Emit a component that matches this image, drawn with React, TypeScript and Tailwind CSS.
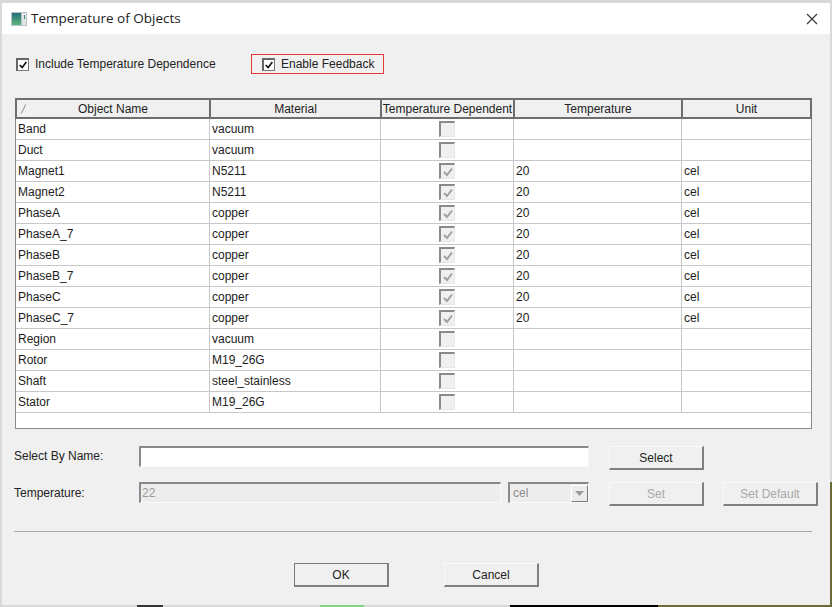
import React from 'react';

interface RowData {
    name: string;
    material: string;
    checked: boolean;
}

const rows: RowData[] = [
    { name: 'Band', material: 'vacuum', checked: false },
    { name: 'Duct', material: 'vacuum', checked: false },
    { name: 'Magnet1', material: 'N5211', checked: true },
    { name: 'Magnet2', material: 'N5211', checked: true },
    { name: 'PhaseA', material: 'copper', checked: true },
    { name: 'PhaseA_7', material: 'copper', checked: true },
    { name: 'PhaseB', material: 'copper', checked: true },
    { name: 'PhaseB_7', material: 'copper', checked: true },
    { name: 'PhaseC', material: 'copper', checked: true },
    { name: 'PhaseC_7', material: 'copper', checked: true },
    { name: 'Region', material: 'vacuum', checked: false },
    { name: 'Rotor', material: 'M19_26G', checked: false },
    { name: 'Shaft', material: 'steel_stainless', checked: false },
    { name: 'Stator', material: 'M19_26G', checked: false },
];

const COLS = 'grid grid-cols-[194px_171px_133px_168px_1fr]';

const CheckMark: React.FC<{ color: string }> = ({ color }) => (
    <svg width="12" height="12" viewBox="0 0 12 12" fill="none">
        <path d="M2 6l3 3 5-6.5" stroke={color} strokeWidth="2" />
    </svg>
);

// enabled dialog checkbox, next to the labels on top
const DialogCheck = () => (
    <span className="w-[13px] h-[13px] bg-white border border-[#777] border-t-[2px] border-l-[2px] border-t-[#666] border-l-[#666] flex items-center justify-center shrink-0">
        <CheckMark color="#111" />
    </span>
);

// greyed out checkbox inside the grid
const GridCheck: React.FC<{ checked: boolean }> = ({ checked }) => (
    <span className="w-[16px] h-[16px] bg-[#f0f0f0] border-t-[2px] border-l-[2px] border-[#8a8a8a] border-r border-b border-r-[#e6e6e6] border-b-[#e6e6e6] flex items-center justify-center">
        {checked && <CheckMark color="#a0a0a0" />}
    </span>
);

const HeaderCell: React.FC<{ label: string; last?: boolean; children?: React.ReactNode }> = ({ label, last, children }) => (
    <div className={`relative h-full flex items-center justify-center text-[#222] ${last ? '' : 'border-r-2 border-[#6e6e6e]'}`}>
        {children}
        {label}
    </div>
);

const Cell: React.FC<{ text?: string; last?: boolean }> = ({ text, last }) => (
    <div className={`pl-[2px] h-full flex items-center text-[#1c1c1c] ${last ? '' : 'border-r border-[#c8c8c8]'}`}>{text}</div>
);

const Btn: React.FC<{ label: string; disabled?: boolean; isDefault?: boolean; className?: string }> = ({ label, disabled, isDefault, className }) => (
    <button
        className={`w-[95px] h-[24px] bg-[#f0f0f0] border-[#fafafa] border-t border-l border-r-2 border-b-2 border-r-[#808080] border-b-[#808080] flex items-center justify-center ${
            isDefault ? 'border-t-[#777] border-l-[#777] text-[#222]' : ''
        } ${disabled ? 'text-[#a8a8a8]' : 'text-[#222]'} ${className ?? ''}`}
    >
        {label}
    </button>
);

export default function App() {
    return (
        <div className="relative w-[832px] h-[607px] overflow-hidden bg-[#d9d9d9] pt-[3px] pl-[2px] pr-[2px] pb-[2px] font-['Liberation_Sans',sans-serif] text-[12px] leading-none">
            {/* Slivers of the application behind the dialog */}
            <div className="absolute left-[510px] bottom-0 w-[148px] h-[2px] bg-black" />
            <div className="absolute left-[658px] bottom-0 w-[174px] h-[2px] bg-[#6b6b3a]" />
            <div className="absolute right-0 top-[482px] w-[2px] h-[125px] bg-[#6b6b3a]" />
            <div className="absolute left-[137px] bottom-0 w-[26px] h-[2px] bg-[#333]" />
            <div className="absolute left-[320px] bottom-0 w-[44px] h-[2px] bg-[#7ed87e]" />

            <div className="h-full flex flex-col bg-[#f0f0f0]">
                {/* Title bar */}
                <div className="h-[31px] bg-white flex items-center justify-between shrink-0 pl-[9px] pr-[12px]">
                    <div className="flex items-center gap-[4px]">
                        <svg width="16" height="14" viewBox="0 0 16 14">
                            <defs>
                                <linearGradient id="ic" x1="0" y1="0" x2="0" y2="1">
                                    <stop offset="0" stopColor="#1f6f7c" />
                                    <stop offset="1" stopColor="#5fb877" />
                                </linearGradient>
                            </defs>
                            <rect x="0" y="0" width="16" height="14" fill="#b8c4c8" />
                            <rect x="1" y="1" width="9" height="12" fill="url(#ic)" />
                            <rect x="11" y="1" width="4" height="12" fill="#dfe5e6" />
                            <rect x="13" y="3" width="1" height="4" fill="#4a8a6a" />
                        </svg>
                        <span className="font-['Open_Sans',sans-serif] text-[13.5px] text-[#222]">Temperature of Objects</span>
                    </div>
                    <svg width="12" height="12" viewBox="0 0 12 12" fill="none">
                        <path d="M1 1l10 10M11 1L1 11" stroke="#333" strokeWidth="1.1" />
                    </svg>
                </div>

                {/* Dialog body */}
                <div className="flex-1 flex flex-col pl-[12px] pr-[18px]">
                    <div className="flex items-center mt-[20px] h-[20px] text-[#222]">
                        <label className="flex items-center gap-[6px] w-[237px] pl-[2px]">
                            <DialogCheck />
                            Include Temperature Dependence
                        </label>
                        <label className="flex items-center gap-[6px] w-[133px] h-[20px] border border-[#e53935] pl-[10px]">
                            <DialogCheck />
                            Enable Feedback
                        </label>
                    </div>

                    {/* Object table */}
                    <div className="mt-[24px] h-[331px] ml-[1px] bg-white border border-[#8a8a8a]">
                        <div className={`${COLS} h-[21px] bg-[#f0f0f0] border-2 border-[#6e6e6e] -mx-px -mt-px`}>
                            <HeaderCell label="Object Name">
                                <svg className="absolute left-[3px] top-[3px]" width="12" height="12" viewBox="0 0 12 12" fill="none">
                                    <path d="M1 11L6 1" stroke="#8c8c8c" strokeWidth="1" />
                                    <path d="M6 1l5 10H1" stroke="#fbfbfb" strokeWidth="1" />
                                </svg>
                            </HeaderCell>
                            <HeaderCell label="Material" />
                            <HeaderCell label="Temperature Dependent" />
                            <HeaderCell label="Temperature" />
                            <HeaderCell label="Unit" last />
                        </div>
                        {rows.map((row) => (
                            <div key={row.name} className={`${COLS} h-[21px] border-b border-[#c8c8c8]`}>
                                <Cell text={row.name} />
                                <Cell text={row.material} />
                                <div className="h-full flex items-center justify-center border-r border-[#c8c8c8]">
                                    <GridCheck checked={row.checked} />
                                </div>
                                <Cell text={row.checked ? '20' : ''} />
                                <Cell text={row.checked ? 'cel' : ''} last />
                            </div>
                        ))}
                    </div>

                    {/* Select by name */}
                    <div className="flex items-start mt-[17px] h-[24px] -mr-[8px]">
                        <span className="w-[125px] pt-[4px] text-[#222] shrink-0">Select By Name:</span>
                        <div className="w-[450px] h-[21px] bg-white border-t-2 border-l-2 border-[#8a8a8a] border-r border-b border-r-[#fafafa] border-b-[#fafafa] shrink-0" />
                        <Btn label="Select" className="ml-[20px]" />
                    </div>

                    {/* Temperature */}
                    <div className="flex items-start mt-[12px] h-[24px] -mr-[8px]">
                        <span className="w-[125px] pt-[5px] text-[#222] shrink-0">Temperature:</span>
                        <div className="w-[362px] h-[21px] bg-[#ededed] border-t-2 border-l-2 border-[#8a8a8a] border-r border-b border-r-[#fafafa] border-b-[#fafafa] flex items-center pl-[1px] text-[#9a9a9a] shrink-0">
                            22
                        </div>
                        <div className="w-[81px] h-[21px] ml-[7px] bg-[#ededed] border-t-2 border-l-2 border-[#8a8a8a] border-r border-b border-r-[#fafafa] border-b-[#fafafa] flex items-center justify-between pl-[3px] text-[#8e8e8e] shrink-0">
                            cel
                            <span className="w-[17px] h-[17px] bg-[#ececec] border-r border-b border-[#7a7a7a] border-t border-l border-t-white border-l-white flex items-center justify-center">
                                <svg width="9" height="5" viewBox="0 0 9 5">
                                    <path d="M0 0h9L4.5 5z" fill="#9a9a9a" />
                                </svg>
                            </span>
                        </div>
                        <Btn label="Set" disabled className="ml-[20px]" />
                        <Btn label="Set Default" disabled className="ml-[19px]" />
                    </div>

                    <div className="mt-[25px] h-px bg-[#a8a8a8] ml-0" />

                    {/* Footer actions */}
                    <div className="flex mt-[31px] ml-[280px] gap-[55px]">
                        <Btn label="OK" isDefault />
                        <Btn label="Cancel" />
                    </div>
                </div>
            </div>
        </div>
    );
}
